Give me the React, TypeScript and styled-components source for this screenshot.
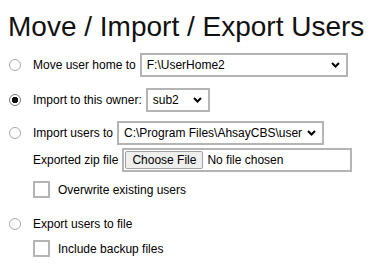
import React, { useState } from "react"
import styled, { createGlobalStyle } from "styled-components"

const GlobalStyle = createGlobalStyle`
  body {
    margin: 8px;
    background: #fff;
    color: #000;
    font-family: "Liberation Sans", Arial, sans-serif;
    font-size: 12px;
  }
`

const Title = styled.h1`
  margin: 3px 0 10px 0;
  font-size: 28px;
  font-weight: normal;
  line-height: 32px;
  color: #111;
`

const Row = styled.div<{ $top?: number; $indent?: boolean; $h?: number }>`
  display: flex;
  align-items: center;
  gap: 4px;
  height: ${(p) => p.$h ?? 24}px;
  margin-top: ${(p) => p.$top ?? 0}px;
  padding-left: ${(p) => (p.$indent ? 25 : 0)}px;
`

const Radio = styled.input.attrs({ type: "radio" })`
  appearance: none;
  box-sizing: border-box;
  width: 12px;
  height: 12px;
  margin: 0 8px 0 1px;
  border: 1px solid #a8a8a8;
  border-radius: 50%;
  background: #fff;

  &:checked {
    border-color: #7a7a7a;
    background: radial-gradient(circle, #111 0 3px, #fff 3.5px);
  }
`

const Check = styled.input.attrs({ type: "checkbox" })`
  appearance: none;
  box-sizing: border-box;
  width: 17px;
  height: 17px;
  margin: 0 4px 0 0;
  border: 2px solid #b4b4b4;
  background: #fff;
`

const SelectWrap = styled.div<{ $w: number }>`
  position: relative;
  width: ${(p) => p.$w}px;
  height: 24px;
`

const Select = styled.select`
  appearance: none;
  box-sizing: border-box;
  width: 100%;
  height: 100%;
  margin: 0;
  padding: 0 18px 0 5px;
  border: 2px solid #b4b4b4;
  border-radius: 0;
  background: #fff;
  color: #000;
  font-family: "Liberation Sans", Arial, sans-serif;
  font-size: 12px;
  outline: none;
`

const Chevron = styled.svg`
  position: absolute;
  right: 8px;
  top: 9px;
  pointer-events: none;
`

const FileBox = styled.div`
  box-sizing: border-box;
  display: flex;
  align-items: center;
  width: 230px;
  height: 24px;
  padding-left: 1px;
  border: 2px solid #b4b4b4;
  background: #fff;
`

const ChooseButton = styled.button`
  box-sizing: border-box;
  height: 18px;
  padding: 0 6px;
  border: 1px solid #a3a3a3;
  border-radius: 2px;
  background: #efefef;
  color: #000;
  font-family: "Liberation Sans", Arial, sans-serif;
  font-size: 12px;
`

const FileName = styled.span`
  margin-left: 4px;
`

const Dropdown = ({ w, value, options }: { w: number; value: string; options: string[] }) => (
  <SelectWrap $w={w}>
    <Select defaultValue={value}>
      {options.map((o) => (
        <option key={o}>{o}</option>
      ))}
    </Select>
    <Chevron width="9" height="6" viewBox="0 0 9 6">
      <path d="M1 1 L4.5 4.5 L8 1" fill="none" stroke="#000" strokeWidth="2" />
    </Chevron>
  </SelectWrap>
)

export default function App() {
  const [mode, setMode] = useState("owner")

  return (
    <>
      <GlobalStyle />
      <Title>Move / Import / Export Users</Title>

      <Row>
        <Radio name="mode" checked={mode === "move"} onChange={() => setMode("move")} />
        <span>Move user home to</span>
        <Dropdown w={208} value="F:\UserHome2" options={["F:\\UserHome2"]} />
      </Row>

      <Row $top={11}>
        <Radio name="mode" checked={mode === "owner"} onChange={() => setMode("owner")} />
        <span>Import to this owner:</span>
        <Dropdown w={64} value="sub2" options={["sub2"]} />
      </Row>

      <Row $top={9}>
        <Radio name="mode" checked={mode === "import"} onChange={() => setMode("import")} />
        <span>Import users to</span>
        <Dropdown
          w={207}
          value="C:\Program Files\AhsayCBS\user"
          options={["C:\\Program Files\\AhsayCBS\\user"]}
        />
      </Row>

      <Row $top={3} $indent>
        <span>Exported zip file</span>
        <FileBox>
          <ChooseButton>Choose File</ChooseButton>
          <FileName>No file chosen</FileName>
        </FileBox>
      </Row>

      <Row $top={9} $h={17} $indent>
        <Check />
        <span>Overwrite existing users</span>
      </Row>

      <Row $top={18} $h={16}>
        <Radio name="mode" checked={mode === "export"} onChange={() => setMode("export")} />
        <span>Export users to file</span>
      </Row>

      <Row $top={8} $h={17} $indent>
        <Check />
        <span>Include backup files</span>
      </Row>
    </>
  )
}
